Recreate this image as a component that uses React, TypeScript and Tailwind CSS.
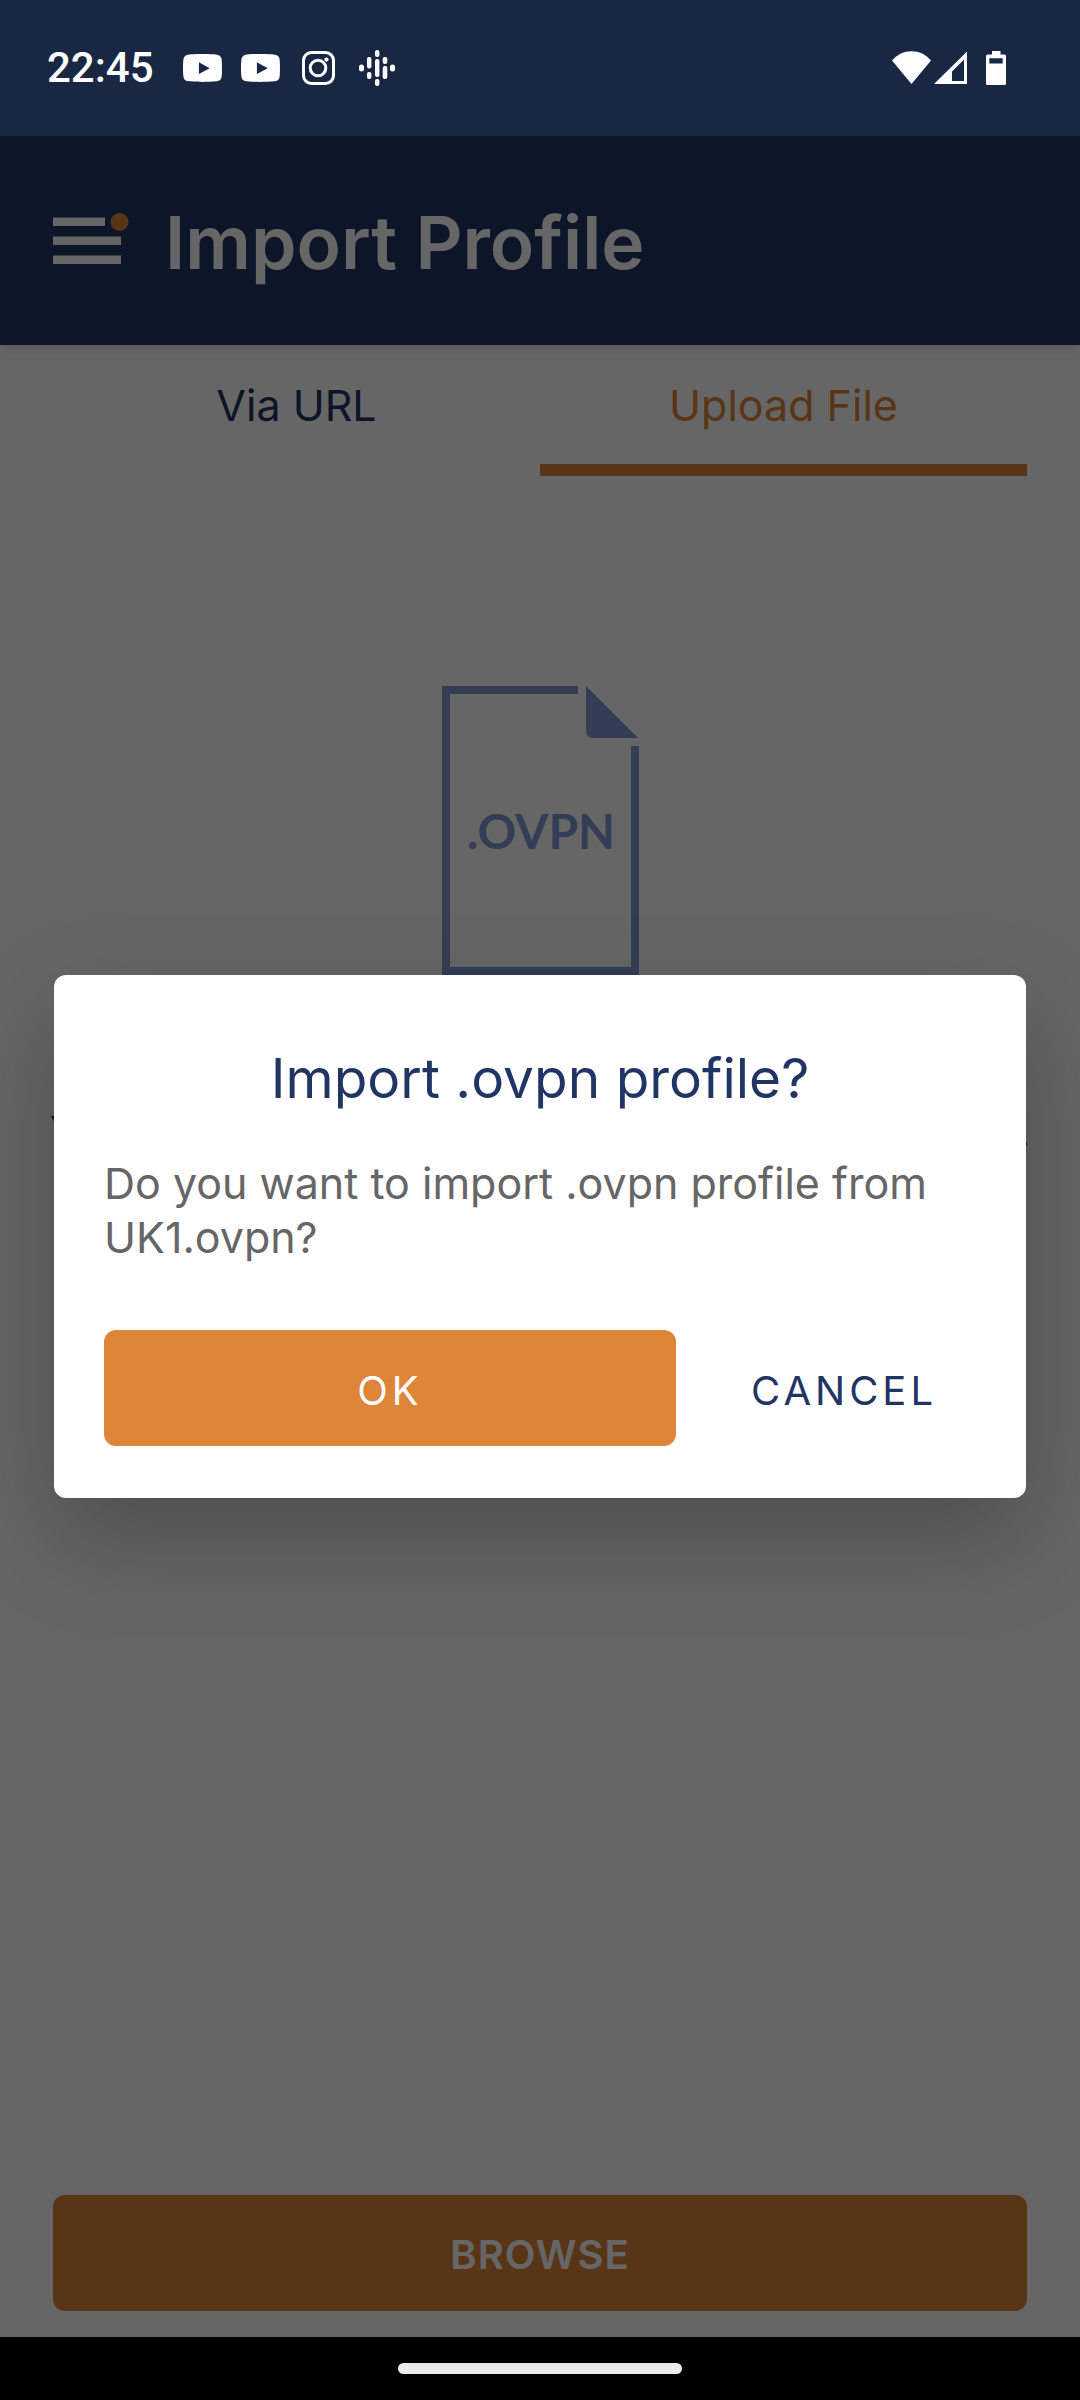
import { useState } from "react";

const TABS = [
  { id: "url", label: "Via URL" },
  { id: "file", label: "Upload File" },
];

function YoutubeIcon() {
  return (
    <svg viewBox="0 0 38 28" preserveAspectRatio="none" className="h-7 w-[39px]">
      <path
        fill="#fff"
        fillRule="evenodd"
        d="M19 0C27 0 31.500 .3 34 .9C36 1.500 37.200 2.800 37.600 5C38.100 8.500 38.100 19.500 37.600 23C37.200 25.200 36 26.500 34 27.100C30 28.200 8 28.200 4 27.100C2 26.500 .9 25.200 .5 23C-.2 19 -.2 9 .5 5C.9 2.800 2 1.500 4 .9C6.500 .3 11 0 19 0ZM15.500 8.300V20L26 14.200Z"
      />
    </svg>
  );
}

function InstagramIcon() {
  return (
    <svg viewBox="0 0 33 34" className="h-[34px] w-[33px]" fill="none" stroke="#fff">
      <rect x="1.500" y="1.500" width="30" height="31" rx="8" strokeWidth="3" />
      <circle cx="16" cy="17" r="7.800" strokeWidth="3" />
      <circle cx="24.500" cy="8.600" r="2.100" fill="#fff" stroke="none" />
    </svg>
  );
}

function PodcastsIcon() {
  return (
    <svg viewBox="0 0 36 36" className="h-9 w-9" fill="#fff">
      <rect x="0" y="14.500" width="5" height="7" rx="2.500" />
      <rect x="8" y="7" width="4.400" height="11.500" rx="2" />
      <rect x="8" y="22" width="4.400" height="7" rx="2" />
      <rect x="16" y="0" width="4.400" height="7" rx="2" />
      <rect x="16" y="9" width="4.400" height="18" rx="2" />
      <rect x="16" y="29" width="4.400" height="7" rx="2" />
      <rect x="23.700" y="7" width="4.600" height="7" rx="2" />
      <rect x="23.700" y="16" width="4.600" height="13" rx="2" />
      <rect x="31" y="14.500" width="5" height="7" rx="2.500" />
    </svg>
  );
}

const NOTIFICACIONES = [YoutubeIcon, YoutubeIcon, InstagramIcon, PodcastsIcon];

function StatusBar() {
  return (
    <div className="flex h-[136px] items-center justify-between bg-[#192745] pr-[74px] pl-[47px] text-white">
      <div className="flex items-center">
        <span className="font-[Roboto,sans-serif] text-[42px] leading-[48px] font-medium">22:45</span>
        <div className="ml-5 flex items-center">
          {NOTIFICACIONES.map((Icono, i) => (
            <span key={i} className="flex w-[58px] justify-center">
              <Icono />
            </span>
          ))}
        </div>
      </div>
      <div className="flex items-center">
        {/* wifi */}
        <svg viewBox="0 0 39 34" className="h-[34px] w-[39px]">
          <path fill="#fff" d="M0 9.500C10 -3 29 -3 39 9.500L19.500 33Z" />
        </svg>
        {/* señal */}
        <svg viewBox="0 0 33 34" className="ml-[3px] h-[34px] w-[33px]">
          <path fill="#fff" fillRule="evenodd" d="M33 .5V33H0ZM30 8.500L18 20.500V30H30Z" />
        </svg>
        {/* batería */}
        <svg viewBox="0 0 20 34" className="ml-[19px] h-[34px] w-5">
          <path
            fill="#fff"
            fillRule="evenodd"
            d="M6 0H14.500V3.500H18.500Q20 3.500 20 5V32.500Q20 34 18.500 34H1.500Q0 34 0 32.500V5Q0 3.500 1.500 3.500H6ZM3.300 7.300V12.500H16.700V7.300Z"
          />
        </svg>
      </div>
    </div>
  );
}

function FileIcon() {
  return (
    <svg viewBox="0 0 197 289" className="h-[289px] w-[197px]">
      <path d="M136 4H4V285H193V60" fill="none" stroke="#809bd7" strokeWidth="8" />
      <path d="M144 0L196 52H151Q144 52 144 44Z" fill="#809bd7" />
      <text
        x="99"
        y="163"
        textAnchor="middle"
        fill="#809bd7"
        className="font-[Lato,sans-serif] text-[48px] font-bold"
      >
        .OVPN
      </text>
    </svg>
  );
}

export default function App() {
  const [tab, setTab] = useState("file");
  const [open, setOpen] = useState(true);

  return (
    <div className="flex min-h-screen flex-col bg-white font-[Inter,sans-serif]">
      <StatusBar />

      <div className="relative flex grow flex-col">
        <header className="flex h-[209px] items-center bg-[#213565] px-[53px] shadow-[0_6px_8px_-2px_rgba(0,0,0,0.12)]">
          <button type="button" aria-label="Menu">
            <svg viewBox="0 0 77 56" className="h-14 w-[77px]">
              <path d="M0 4.500H52V13H0ZM0 23.500H68V32H0ZM0 42.500H68V51H0Z" fill="#fff" />
              <circle cx="66.500" cy="9" r="9" fill="#df853a" />
            </svg>
          </button>
          <h1 className="ml-[35px] pt-1 text-[73px] leading-[88px] font-semibold text-white">Import Profile</h1>
        </header>

        <nav className="flex px-[53px]">
          {TABS.map((t) => (
            <button
              key={t.id}
              type="button"
              onClick={() => setTab(t.id)}
              className={`flex-1 border-b-[12px] pt-8 pb-[31px] text-[43px] leading-[56px] ${
                tab === t.id ? "border-[#df853a] text-[#df853a]" : "border-transparent text-[#213565]"
              }`}
            >
              {t.label}
            </button>
          ))}
        </nav>

        <main className="flex grow flex-col items-center px-[42px] pt-[210px]">
          <FileIcon />
          <p className="mt-32 text-center text-[43px] leading-[56px] font-medium whitespace-nowrap text-[#333]">
            You can import only a single .ovpn file at a time.
          </p>
        </main>

        <div className="px-[53px] pb-[26px]">
          <button
            type="button"
            className="h-[116px] w-full rounded-xl bg-[#df853a] pt-1 text-[40px] font-semibold tracking-[1px] text-white"
          >
            BROWSE
          </button>
        </div>

        {/* DIALOGO */}
        {open && (
          <div className="absolute inset-0 flex items-center justify-center bg-black/60 px-[54px]">
            <div
              role="dialog"
              aria-labelledby="dialog-title"
              className="w-full rounded-xl bg-white px-[50px] pt-[69px] pb-[52px] shadow-[0_40px_100px_rgba(0,0,0,0.24)]"
            >
              <h2 id="dialog-title" className="text-center text-[55px] leading-[68px] text-[#213565]">
                Import .ovpn profile?
              </h2>
              <p className="mt-11 text-[43px] leading-[54px] text-[#666]">
                Do you want to import .ovpn profile from UK1.ovpn?
              </p>
              <div className="mt-[66px] flex gap-9">
                <button
                  type="button"
                  onClick={() => setOpen(false)}
                  className="h-[116px] flex-[13] rounded-xl bg-[#df853a] pt-1.5 text-[40px] tracking-[4px] text-white"
                >
                  OK
                </button>
                <button
                  type="button"
                  onClick={() => setOpen(false)}
                  className="h-[116px] flex-[6] pt-1.5 text-[40px] tracking-[4px] text-[#213565]"
                >
                  CANCEL
                </button>
              </div>
            </div>
          </div>
        )}
      </div>

      {/* BARRA DE NAVEGACION */}
      <div className="flex h-[63px] items-center justify-center bg-black">
        <div className="h-[11px] w-[284px] rounded-full bg-[#ebebeb]" />
      </div>
    </div>
  );
}
